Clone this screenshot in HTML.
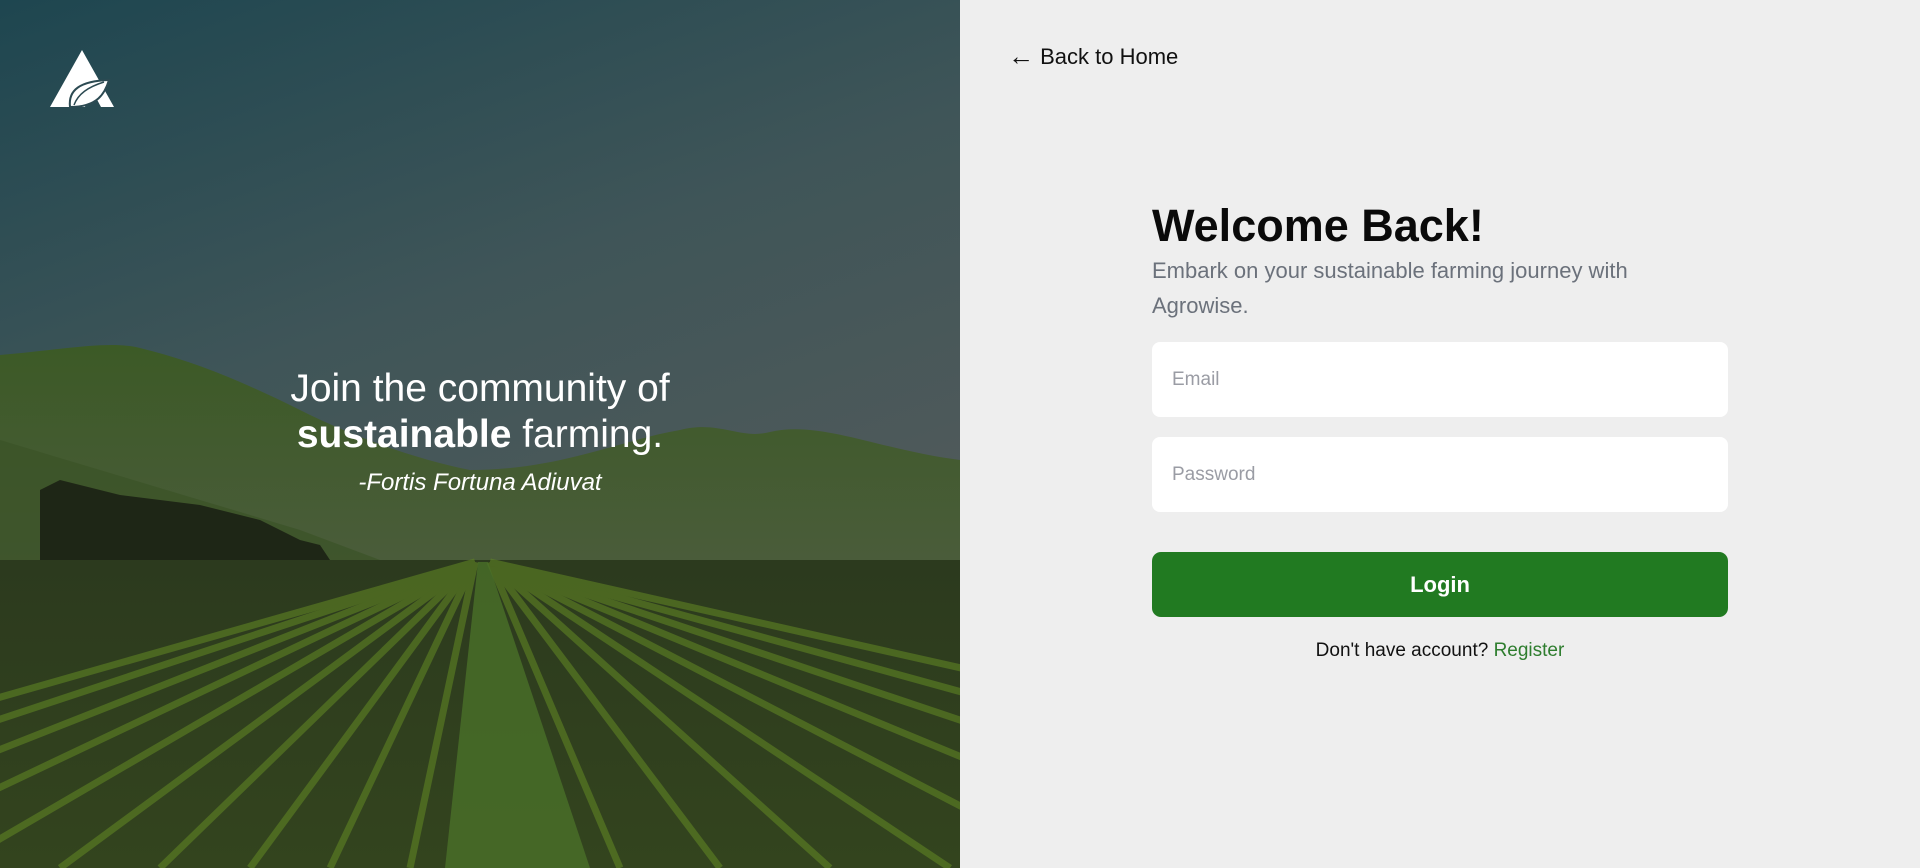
<!DOCTYPE html>
<html><head><meta charset="utf-8"><style>
*{margin:0;padding:0;box-sizing:border-box}
body{width:1920px;height:868px;overflow:hidden;background:#eeeeee;font-family:"Liberation Sans",sans-serif;position:relative}
.left{position:absolute;left:0;top:0;width:960px;height:868px;overflow:hidden}
.q{position:absolute;left:0;width:960px;text-align:center;color:#fff}
.back{position:absolute;left:1008px;top:44px;font-size:22px;color:#111;}
.right *{position:absolute}
.in{left:1152px;width:576px;height:75px;background:#fff;border-radius:8px;font-size:19px;color:#9a9ca4;padding-left:20px;line-height:75px}
</style></head><body>
<div class="left">
<svg width="960" height="868" viewBox="0 0 960 868">
<defs>
<linearGradient id="sky" x1="0" y1="0" x2="0.4" y2="1"><stop offset="0" stop-color="#1e4650"/><stop offset="0.45" stop-color="#3f5558"/><stop offset="1" stop-color="#575c5b"/></linearGradient>
<linearGradient id="hill" x1="0" y1="0" x2="0" y2="1"><stop offset="0" stop-color="#3c5a26"/><stop offset="1" stop-color="#4a5c3a"/></linearGradient>
<linearGradient id="field" x1="0" y1="0" x2="0" y2="1"><stop offset="0" stop-color="#2c3a1e"/><stop offset="1" stop-color="#33441e"/></linearGradient>
</defs>
<rect width="960" height="868" fill="url(#sky)"/>
<path d="M0 355 C60 350 110 340 140 348 C190 360 240 380 300 410 C360 440 420 460 470 470 C560 470 620 440 680 430 C720 420 740 440 770 432 C820 420 880 450 960 460 L960 560 L0 560Z" fill="url(#hill)"/>
<path d="M0 440 C100 470 200 500 300 530 L380 560 L0 560Z" fill="#3a5226" opacity="0.7"/>
<path d="M40 490 L60 480 L120 495 L200 505 L260 520 L300 540 L320 545 L330 560 L40 560Z" fill="#1e2616"/>
<rect y="560" width="960" height="308" fill="url(#field)"/>
<g stroke="#5f8424" stroke-width="7" opacity="0.6">
<line x1="475" y1="562" x2="-600" y2="868"/><line x1="475" y1="562" x2="-450" y2="868"/><line x1="475" y1="562" x2="-300" y2="868"/><line x1="475" y1="562" x2="-170" y2="868"/><line x1="475" y1="562" x2="-50" y2="868"/><line x1="475" y1="562" x2="60" y2="868"/><line x1="475" y1="562" x2="160" y2="868"/><line x1="475" y1="562" x2="250" y2="868"/><line x1="475" y1="562" x2="330" y2="868"/><line x1="475" y1="562" x2="410" y2="868"/>
<line x1="490" y1="562" x2="620" y2="868"/><line x1="490" y1="562" x2="720" y2="868"/><line x1="490" y1="562" x2="830" y2="868"/><line x1="490" y1="562" x2="950" y2="868"/><line x1="490" y1="562" x2="1080" y2="868"/><line x1="490" y1="562" x2="1230" y2="868"/><line x1="490" y1="562" x2="1400" y2="868"/><line x1="490" y1="562" x2="1600" y2="868"/><line x1="490" y1="562" x2="1850" y2="868"/>
</g>
<path d="M445 868 L478 562 L488 562 L590 868Z" fill="#4a7028" opacity="0.8"/>
</svg>
<svg style="position:absolute;left:50px;top:50px" width="64" height="58" viewBox="0 0 64 58">
<path d="M32 0 L64 57 L51 57 L44 44 L38 46 L35 57 L0 57Z" fill="#fff"/>
<path d="M20 57 C18 40 30 31 59 30 C55 43 48 57 20 57Z" fill="#fff" stroke="#2c4a52" stroke-width="2"/>
<path d="M24 55 C28 44 38 37 54 32" fill="none" stroke="#2c4a52" stroke-width="1.5"/>
</svg>
<div class="q" style="top:366px;font-size:39px;line-height:46px">Join the community of<br><b>sustainable</b> farming.</div>
<div class="q" style="top:469px;font-size:24px;font-style:italic">-Fortis Fortuna Adiuvat</div>
</div>
<div class="back"><span style="font-size:26px;line-height:22px;vertical-align:-1px">&#8592;</span> Back to Home</div>
<div class="right">
<div style="left:1152px;top:200px;font-size:45px;font-weight:bold;color:#0a0a0a">Welcome Back!</div>
<div style="left:1152px;top:253px;font-size:22px;line-height:35px;color:#6b717b;width:560px">Embark on your sustainable farming journey with Agrowise.</div>
<div class="in" style="top:342px">Email</div>
<div class="in" style="top:437px">Password</div>
<div style="left:1152px;top:552px;width:576px;height:65px;background:#217a21;border-radius:9px;color:#fff;font-weight:bold;font-size:22px;text-align:center;line-height:65px">Login</div>
<div style="left:1152px;width:576px;top:640px;text-align:center;font-size:19px;color:#111">Don't have account? <span style="position:static;color:#2e7d2e">Register</span></div>
</div>
</body></html>
